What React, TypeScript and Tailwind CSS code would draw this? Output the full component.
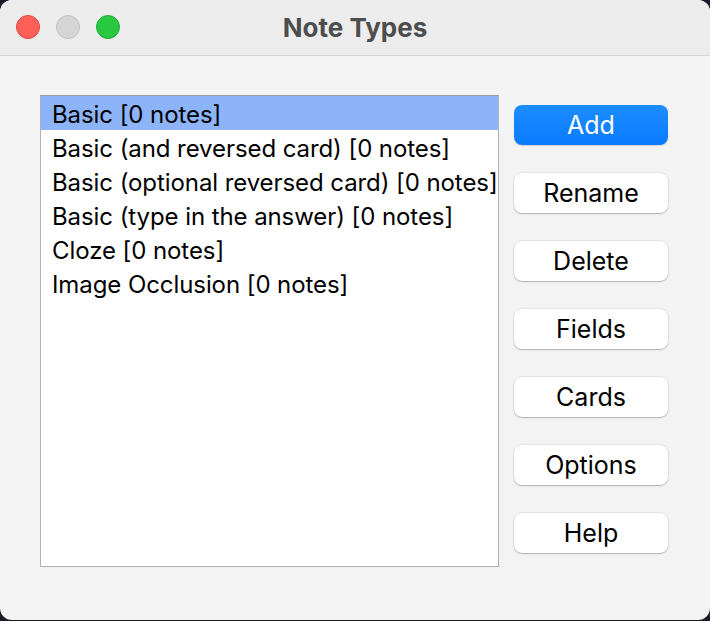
import React from "react";

const items = [
  "Basic [0 notes]",
  "Basic (and reversed card) [0 notes]",
  "Basic (optional reversed card) [0 notes]",
  "Basic (type in the answer) [0 notes]",
  "Cloze [0 notes]",
  "Image Occlusion [0 notes]",
];

const buttons = ["Rename", "Delete", "Fields", "Cards", "Options", "Help"];

export default function App() {
  return (
    <div
      className="w-[710px] h-[621px] bg-[#1b1b28]"
      style={{ fontFamily: "Inter, 'Liberation Sans', sans-serif" }}
    >
      <div className="w-[710px] h-[620px] rounded-[12px] overflow-hidden bg-[#f3f3f3] flex flex-col">
        <div className="h-[56px] bg-[#ececec] border-b border-[#d6d6d6] flex items-center relative">
          <div className="absolute left-[16px] top-[15px] flex gap-[16px]">
            <div className="w-[24px] h-[24px] rounded-full bg-[#fe5f57] border border-[#e2463f]" />
            <div className="w-[24px] h-[24px] rounded-full bg-[#d5d5d5] border border-[#c0c0c0]" />
            <div className="w-[24px] h-[24px] rounded-full bg-[#28c840] border border-[#1eae32]" />
          </div>
          <div className="flex-1 text-center text-[26px] leading-none font-bold text-[#4d4d4d] pt-[1px]">
            Note Types
          </div>
        </div>
        <div className="flex pl-[40px] pt-[39px]">
          <div className="w-[459px] h-[472px] bg-white border border-[#b0b0b0] border-t-[#9c9c9c] overflow-hidden">
            {items.map((t, i) => (
              <div
                key={t}
                className={`h-[34px] pl-[11px] flex items-center text-[24px] leading-none tracking-[-0.08px] text-black whitespace-nowrap ${
                  i === 0 ? "bg-[#8db4f8]" : ""
                }`}
              >
                <span className="pt-[3px]">{t}</span>
              </div>
            ))}
          </div>
          <div className="ml-[15px] mt-[10px] flex flex-col gap-[28px]">
            <button className="w-[154px] h-[40px] rounded-[8px] bg-gradient-to-b from-[#1c8dff] to-[#0a7bff] text-white text-[25px] leading-none shadow-[0_1px_1px_rgba(0,0,0,0.15)]">
              Add
            </button>
            {buttons.map((b) => (
              <button
                key={b}
                className="w-[154px] h-[40px] rounded-[8px] bg-white text-black text-[25px] leading-none shadow-[0_0_0_0.5px_rgba(0,0,0,0.12),0_1px_1.5px_rgba(0,0,0,0.22)]"
              >
                {b}
              </button>
            ))}
          </div>
        </div>
      </div>
    </div>
  );
}
